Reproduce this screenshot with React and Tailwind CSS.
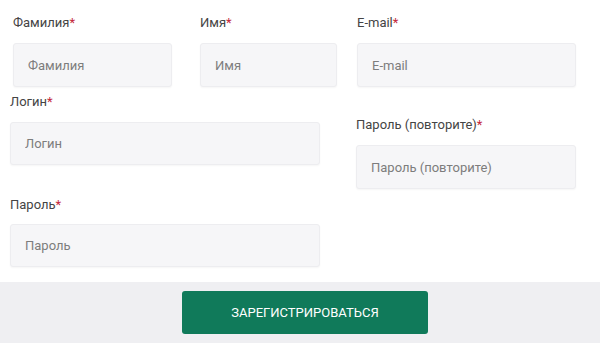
import React from "react";

function Field({ label, className = "", inputClass = "h-[44px]" }) {
  return (
    <div className={className}>
      <label className="block text-[13px] leading-[16px] text-[#444]">
        {label}
        <span className="text-[#c4283a]">*</span>
      </label>
      <input
        type="text"
        placeholder={label}
        className={`mt-[12px] block w-full rounded-[3px] border border-[#ededf0] bg-[#f6f6f8] px-[14px] text-[13px] text-[#333] placeholder-[#7d7d7d] shadow-[0_1px_2px_rgba(0,0,0,0.04)] outline-none ${inputClass}`}
      />
    </div>
  );
}

export default function App() {
  return (
    <div className="w-[600px] h-[343px] overflow-hidden bg-white font-['Roboto',sans-serif]">
      <div className="pt-[15px]">
        {/* top row */}
        <div className="flex items-start">
          <Field label="Фамилия" className="ml-[13px] w-[159px]" />
          <Field label="Имя" className="ml-[28px] w-[137px]" />
          <Field label="E-mail" className="ml-[20px] w-[219px]" inputClass="h-[44px] -mt-[1px]" />
        </div>

        {/* second block */}
        <div className="mt-[7px] flex items-start">
          <div className="ml-[10px] w-[310px] shrink-0">
            <Field label="Логин" inputClass="h-[43px]" />
            <Field label="Пароль" className="mt-[32px]" inputClass="h-[43px] !mt-[11px]" />
          </div>
          <Field label="Пароль (повторите)" className="ml-[36px] mt-[23px] w-[220px] shrink-0" />
        </div>
      </div>

      {/* footer */}
      <div className="mt-[15px] h-[61px] bg-[#efeff2] pt-[9px]">
        <button className="ml-[182px] h-[43px] w-[246px] rounded-[3px] bg-[#107a5a] text-[13px] font-normal uppercase text-white">
          Зарегистрироваться
        </button>
      </div>
    </div>
  );
}
